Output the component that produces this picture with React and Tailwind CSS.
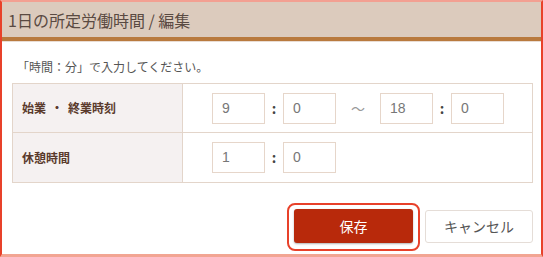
export default function App() {
  const font = { fontFamily: '"Noto Sans CJK JP", "Noto Sans", sans-serif' };
  const Input = ({ v }) => (
    <div className="w-[53px] h-[31px] border border-[#e6d6ca] bg-white flex items-center pl-[9px] text-[14px] text-[#777]" style={{ fontFamily: '"Liberation Sans", "Noto Sans CJK JP", sans-serif' }}>
      {v}
    </div>
  );
  const Colon = () => (
    <div className="w-[18px] flex justify-center text-[14px] font-bold text-[#444]">:</div>
  );
  return (
    <div className="w-[543px] h-[257px] bg-white border-l-2 border-l-[#e8412a] border-r-2 border-r-[#e8412a] border-t-2 border-t-[#f3a092] border-b-[3px] border-b-[#f2a593] flex flex-col" style={font}>
      <div className="h-[35px] bg-[#dccbbd] flex items-center pl-[6px] text-[16px] text-[#5a4a42]">
        1日の所定労働時間 / 編集
      </div>
      <div className="h-[4px] bg-[#b97a3e]" />
      <div className="h-[1px] bg-[#e9ddd4]" />
      <div className="pt-[16px] pl-[15px] text-[12px] leading-[18px] text-[#555]">「時間：分」で入力してください。</div>
      <div className="ml-[10px] mt-[7px] w-[521px] border border-[#e3d5ca] flex flex-col">
        <div className="flex h-[49px] border-b border-[#e3d5ca]">
          <div className="w-[170px] bg-[#f5f1f1] border-r border-[#e3d5ca] flex items-center pl-[9px] text-[12px] font-bold text-[#5a3a2c]">
            始業<span className="mx-[5px]">・</span>終業時刻
          </div>
          <div className="flex items-center pl-[29px]">
            <Input v="9" />
            <Colon />
            <Input v="0" />
            <div className="w-[44px] flex justify-center text-[14px] text-[#999]">〜</div>
            <Input v="18" />
            <Colon />
            <Input v="0" />
          </div>
        </div>
        <div className="flex h-[49px]">
          <div className="w-[170px] bg-[#f5f1f1] border-r border-[#e3d5ca] flex items-center pl-[9px] text-[12px] font-bold text-[#5a3a2c]">休憩時間</div>
          <div className="flex items-center pl-[29px]">
            <Input v="1" />
            <Colon />
            <Input v="0" />
          </div>
        </div>
      </div>
      <div className="flex justify-end items-center mt-[20px] mr-[8px] gap-[5px]">
        <div className="border-2 border-[#e8412a] rounded-[8px] px-[5px] pt-[4px] pb-[6px]">
          <div className="w-[119px] h-[34px] bg-[#b8290b] rounded-[3px] flex items-center justify-center text-white text-[14px] shadow-[0_1px_2px_rgba(0,0,0,0.3)]">保存</div>
        </div>
        <div className="w-[108px] h-[33px] mt-[-1px] border border-[#e5ddd7] rounded-[3px] bg-white flex items-center justify-center text-[14px] text-[#555]">キャンセル</div>
      </div>
    </div>
  );
}
